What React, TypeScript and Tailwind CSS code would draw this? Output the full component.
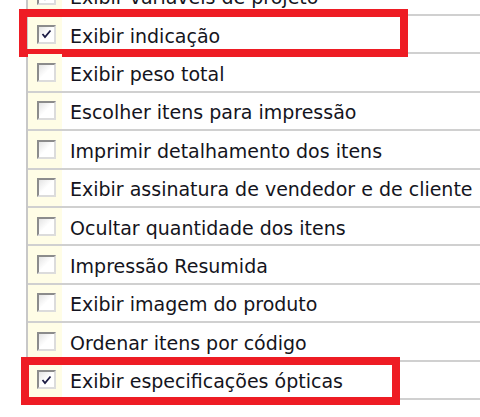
const items = [
  { label: 'Exibir variáveis de projeto', checked: true },
  { label: 'Exibir indicação', checked: true, mark: 'top-[-7px] left-[-9px] w-[389px] h-[48px]' },
  { label: 'Exibir peso total', checked: false },
  { label: 'Escolher itens para impressão', checked: false },
  { label: 'Imprimir detalhamento dos itens', checked: false },
  { label: 'Exibir assinatura de vendedor e de cliente', checked: false },
  { label: 'Ocultar quantidade dos itens', checked: false },
  { label: 'Impressão Resumida', checked: false },
  { label: 'Exibir imagem do produto', checked: false },
  { label: 'Ordenar itens por código', checked: false },
  { label: 'Exibir especificações ópticas', checked: true, mark: 'top-[-5px] left-[-7px] w-[379px] h-[48px]' },
];

const Checkbox = ({ checked }: { checked: boolean }) => (
  <div className="w-[19px] h-[19px] border-2 border-t-[#8c8c8c] border-l-[#8c8c8c] border-r-[#dcdcdc] border-b-[#dcdcdc] bg-gradient-to-br from-[#e4e4e4] via-white to-white flex items-center justify-center">
    {checked && (
      <svg width="11" height="10" viewBox="0 0 11 10">
        <path d="M1.5 5 L4 8 L9.5 1.5" fill="none" stroke="#1c1c44" strokeWidth="1.8" />
      </svg>
    )}
  </div>
);

export default function App() {
  return (
    <div className="w-[480px] h-[417px] overflow-hidden bg-white font-['DejaVu_Sans',sans-serif] text-[19px] text-[#141420]">
      <div className="ml-[26px] h-full border-l-2 border-[#c8c8c8]">
        <div className="-mt-[22.4px]">
          {items.map((it) => (
            <div key={it.label} className="relative flex h-[38.4px] border-b-2 border-[#d0d0d0]">
              <div className="w-[34px] bg-[#fffde6] flex items-center pl-[9px]">
                <Checkbox checked={it.checked} />
              </div>
              <span className="ml-[8px] pt-[4px] self-center leading-none whitespace-nowrap">{it.label}</span>
              {it.mark && <div className={`absolute border-8 border-[#ee1c24] ${it.mark}`} />}
            </div>
          ))}
        </div>
      </div>
    </div>
  );
}
